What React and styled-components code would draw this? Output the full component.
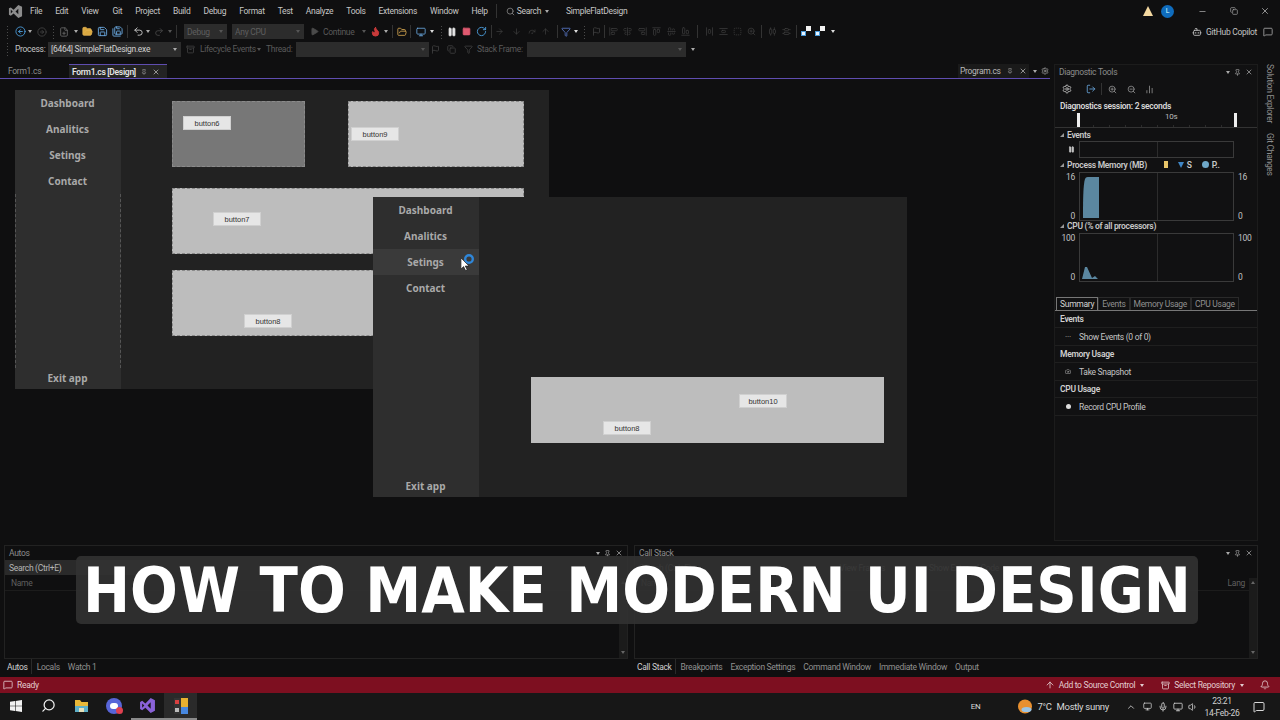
import React from 'react';
import styled, { createGlobalStyle } from 'styled-components';
import {
  AlignCenterHorizontal, AlignCenterVertical, AlignEndHorizontal, AlignEndVertical, AlignHorizontalDistributeCenter,
  AlignHorizontalSpaceAround, AlignStartHorizontal, AlignStartVertical, AlignVerticalDistributeCenter,
  AlignVerticalSpaceAround, Archive, ArrowDown, ArrowLeftCircle, ArrowRight, ArrowRightCircle, ArrowUp, BarChart2,
  Bell, Bot, Camera, ChevronUp, Copy, FilePlus, Filter, Flag, Flame, FolderOpen, LogOut, MessageSquare, Mic, Minus,
  Monitor, Pause, Pin, Play, Redo2, RedoDot, RotateCw, Save, SaveAll, Search, Settings, Square, SquareDashed, Undo2,
  Volume1, X, ZoomIn, ZoomOut,
} from 'lucide-react';

const GlobalStyle = createGlobalStyle`
  html, body { margin: 0; padding: 0; background: #0f0f10; }
  * { box-sizing: border-box; }
  #root { width: 1280px; height: 720px; overflow: hidden; }
`;

const Page = styled.div`
  position: relative;
  width: 1280px;
  height: 720px;
  display: flex;
  flex-direction: column;
  background: #0f0f10;
  color: #c4c4c4;
  font-family: Roboto, "Liberation Sans", sans-serif;
  font-size: 8.5px;
  letter-spacing: -0.3px;
  overflow: hidden;
`;

/* top chrome */
const MenuBar = styled.div`
  height: 22px;
  display: flex;
  align-items: center;
  flex: none;
`;
const Logo = styled.div`
  width: 30px;
  display: flex;
  justify-content: center;
`;
const MenuItem = styled.span`
  margin-right: ${(p) => p.$gap}px;
  margin-left: ${(p) => p.$left || 0}px;
  color: #c6c6c6;
`;
const Divider = styled.span`
  width: 1px;
  height: ${(p) => p.$h || 14}px;
  background: #333;
  margin: 0 ${(p) => p.$m ?? 5}px;
  flex: none;
`;
const Spacer = styled.div`
  flex: 1;
`;
const Gap = styled.div`
  width: ${(p) => p.$w}px;
  flex: none;
`;
const WinButton = styled.div`
  width: 31px;
  display: flex;
  justify-content: center;
  color: #aaa;
`;
const Avatar = styled.div`
  width: 13px;
  height: 13px;
  border-radius: 50%;
  background: #0f6cbd;
  color: #dff;
  font-size: 7px;
  display: flex;
  align-items: center;
  justify-content: center;
`;
const Warn = styled.div`
  width: 0;
  height: 0;
  border-left: 5px solid transparent;
  border-right: 5px solid transparent;
  border-bottom: 10px solid #f3d8a0;
  margin-right: 8px;
`;

const ToolRow = styled.div`
  height: ${(p) => p.$h}px;
  display: flex;
  align-items: center;
  flex: none;
`;
const Slot = styled.span`
  width: ${(p) => p.$w || 14}px;
  flex: none;
  display: flex;
  justify-content: center;
  align-items: center;
  color: ${(p) => p.$c || '#8f8f8f'};
`;
const Caret = styled.span`
  width: 0;
  height: 0;
  flex: none;
  border-left: 2.5px solid transparent;
  border-right: 2.5px solid transparent;
  border-top: 3px solid ${(p) => p.$c || '#aaa'};
  margin: 0 ${(p) => p.$m ?? 3}px;
`;
const Combo = styled.div`
  width: ${(p) => p.$w}px;
  height: 15px;
  flex: none;
  background: ${(p) => p.$bg || '#2c2c2c'};
  color: ${(p) => p.$c || '#5e5e5e'};
  display: flex;
  align-items: center;
  justify-content: space-between;
  padding: 0 3px;
  margin-right: ${(p) => p.$mr || 0}px;
`;
const ToolText = styled.span`
  width: ${(p) => p.$w}px;
  flex: none;
  color: ${(p) => p.$c || '#5a5a5a'};
  margin-left: ${(p) => p.$l || 0}px;
  margin-right: ${(p) => p.$r || 0}px;
  white-space: nowrap;
`;
const Grip = styled.span`
  width: 3px;
  height: 14px;
  flex: none;
  margin: 0 ${(p) => p.$r ?? 2}px 0 ${(p) => p.$l ?? 1}px;
  background-image: radial-gradient(#4a4a4a 0.6px, transparent 0.7px);
  background-size: 3px 3px;
`;

/* workspace */
const Workspace = styled.div`
  height: 485px;
  flex: none;
  display: flex;
  padding-top: 7px;
`;
const Editor = styled.div`
  width: 1052px;
  flex: none;
  display: flex;
  flex-direction: column;
`;
const DocTabs = styled.div`
  height: 15px;
  display: flex;
  align-items: stretch;
  border-bottom: 1px solid #5f4db0;
  flex: none;
  padding-left: 3px;
  margin-right: 2px;
`;
const DocTab = styled.div`
  display: flex;
  align-items: center;
  gap: ${(p) => p.$gap || 5}px;
  width: ${(p) => p.$w}px;
  padding-left: ${(p) => p.$pad ?? 5}px;
  flex: none;
  white-space: nowrap;
  background: ${(p) => (p.$active ? '#232323' : p.$bg || 'transparent')};
  border-top: ${(p) => (p.$active ? '1px solid #5f4db0' : 'none')};
  color: ${(p) => (p.$active ? '#e2e2e2' : p.$c || '#8e8e8e')};
  font-weight: ${(p) => (p.$active ? 600 : 400)};
`;
const Designer = styled.div`
  position: relative;
  flex: 1;
`;
const Form = styled.div`
  position: absolute;
  left: ${(p) => p.$x}px;
  top: ${(p) => p.$y}px;
  width: 534px;
  height: ${(p) => p.$h}px;
  display: flex;
  background: #222222;
`;
const SideBar = styled.div`
  width: 106px;
  flex: none;
  display: flex;
  flex-direction: column;
  background: #2e2e2e;
  position: relative;
`;
const SideItem = styled.div`
  height: 26px;
  flex: none;
  display: flex;
  align-items: center;
  justify-content: center;
  padding: 0 1px 1px 0;
  color: #a9a9a9;
  font-family: "Noto Sans", sans-serif;
  font-size: 10px;
  font-weight: 700;
  letter-spacing: 0;
  background: ${(p) => (p.$hover ? '#3a3a3a' : 'transparent')};
`;
const ExitItem = styled(SideItem)`
  margin-top: auto;
  height: 22px;
`;
const DashedFrame = styled.div`
  position: absolute;
  left: 0;
  right: 0;
  top: 104px;
  height: 174px;
  border-left: 1px dashed #555;
  border-right: 1px dashed #555;
`;
const Surface = styled.div`
  position: relative;
  flex: 1;
`;
const DesignPanel = styled.div`
  position: absolute;
  left: ${(p) => p.$x}px;
  top: ${(p) => p.$y}px;
  width: ${(p) => p.$w}px;
  height: 66px;
  background: ${(p) => p.$bg || '#bdbdbd'};
  outline: ${(p) => (p.$plain ? 'none' : '1px dashed #8a8a8a')};
  outline-offset: -1px;
`;
const FormButton = styled.div`
  position: absolute;
  left: ${(p) => p.$x}px;
  top: ${(p) => p.$y}px;
  width: 48px;
  height: 14px;
  background: #e6e6e6;
  border: 1px solid #d0d0d0;
  color: #333;
  font-family: "Liberation Sans", sans-serif;
  font-size: 7.5px;
  letter-spacing: 0;
  display: flex;
  align-items: center;
  justify-content: center;
`;
const CursorMark = styled.div`
  position: absolute;
  left: 88px;
  top: 54px;
  width: 20px;
  height: 22px;
`;

/* diagnostics */
const Diagnostics = styled.div`
  width: 204px;
  margin-left: 2px;
  flex: none;
  display: flex;
  flex-direction: column;
  background: #111112;
  border: 1px solid #1c1c1c;
  height: 477px;
`;
const PaneTitle = styled.div`
  height: 14px;
  flex: none;
  display: flex;
  align-items: center;
  padding: 0 4px;
  color: #8c8c8c;
  justify-content: space-between;
`;
const PaneActions = styled.div`
  display: flex;
  align-items: center;
  gap: 4px;
  color: #b5b5b5;
`;
const DiagTools = styled.div`
  height: 18px;
  margin-top: 1px;
  flex: none;
  display: flex;
  align-items: center;
  padding-left: 4px;
`;
const SessionText = styled.div`
  height: 15px;
  flex: none;
  padding-left: 5px;
  display: flex;
  align-items: center;
  font-weight: 600;
  color: #d8d8d8;
`;
const Timeline = styled.div`
  position: relative;
  height: 15px;
  flex: none;
  border-bottom: 1px solid #333;
  background: repeating-linear-gradient(90deg, #2c2c2c 0 1px, transparent 1px 16px) 22px 12px / 160px 2px no-repeat;
`;
const TimeHandle = styled.span`
  position: absolute;
  left: ${(p) => p.$x}px;
  top: 0;
  width: 3px;
  height: 14px;
  background: #eee;
`;
const TimeLabel = styled.span`
  position: absolute;
  left: 110px;
  top: -1px;
  font-size: 8px;
  color: #bbb;
`;
const GraphHead = styled.div`
  height: 13px;
  flex: none;
  display: flex;
  align-items: center;
  gap: 3px;
  padding-left: 5px;
  font-weight: 600;
  color: #c8c8c8;
`;
const Tri = styled.span`
  width: 0;
  height: 0;
  border-bottom: 4px solid #999;
  border-left: 4px solid transparent;
`;
const GraphRow = styled.div`
  display: grid;
  grid-template-columns: 24px 155px 21px;
  height: ${(p) => p.$h}px;
  flex: none;
  margin-top: ${(p) => p.$mt ?? 1}px;
`;
const AxisCol = styled.div`
  display: flex;
  flex-direction: column;
  justify-content: space-between;
  align-items: ${(p) => (p.$left ? 'flex-end' : 'flex-start')};
  padding: 0 4px;
  color: #c2c2c2;
`;
const PauseCol = styled(AxisCol)`
  justify-content: center;
`;
const GraphBox = styled.div`
  border: 1px solid #3a3a3a;
  background: linear-gradient(#2c2c2c, #2c2c2c) 77px 0 / 1px 100% no-repeat;
`;
const LegendDot = styled.span`
  width: 7px;
  height: 7px;
  border-radius: 50%;
  background: #6fa8c8;
  margin-left: 7px;
`;
const LegendTri = styled.span`
  width: 0;
  height: 0;
  border-top: 6px solid #3f86c6;
  border-left: 3.5px solid transparent;
  border-right: 3.5px solid transparent;
  margin-left: 7px;
`;
const LegendMark = styled.span`
  width: 4px;
  height: 7px;
  background: #e8c56a;
  margin-left: 14px;
`;
const DiagTabs = styled.div`
  display: flex;
  height: 14px;
  margin-top: 17px;
  flex: none;
  padding-left: 1px;
  border-bottom: 1px solid #777;
`;
const DiagTab = styled.div`
  padding: 0 3px;
  display: flex;
  align-items: center;
  white-space: nowrap;
  color: ${(p) => (p.$active ? '#d5d5d5' : '#8f8f8f')};
  border: 1px solid ${(p) => (p.$active ? '#777' : '#2a2a2a')};
  border-bottom: none;
`;
const SumHead = styled.div`
  height: 17px;
  flex: none;
  display: flex;
  align-items: center;
  padding-left: 5px;
  font-weight: 600;
  color: #cfcfcf;
  border-bottom: 1px solid #1f1f1f;
`;
const SumRow = styled.div`
  height: 18px;
  flex: none;
  display: flex;
  align-items: center;
  padding-left: 10px;
  gap: 8px;
  color: #c4c4c4;
  border-bottom: 1px solid #1f1f1f;
`;
const SumIcon = styled.span`
  width: 6px;
  height: 6px;
  display: flex;
  align-items: center;
  justify-content: center;
  color: #aaa;
`;
const RecordDot = styled.span`
  width: 5px;
  height: 5px;
  border-radius: 50%;
  background: #ddd;
`;

const SideRail = styled.div`
  width: 20px;
  flex: none;
  display: flex;
  flex-direction: column;
  align-items: center;
  gap: 10px;
  padding-left: 4px;
`;
const RailLabel = styled.div`
  writing-mode: vertical-rl;
  color: #8e8e8e;
`;

/* bottom panes */
const BottomArea = styled.div`
  height: 135px;
  flex: none;
  display: flex;
  gap: 6px;
  padding: 3px 22px 0 4px;
`;
const BottomPane = styled.div`
  width: 624px;
  flex: none;
  display: flex;
  flex-direction: column;
`;
const PaneBody = styled.div`
  position: relative;
  height: 114px;
  border: 1px solid #222;
  display: flex;
  flex-direction: column;
`;
const SearchBar = styled.div`
  height: 15px;
  width: ${(p) => p.$w || 'auto'};
  display: flex;
  align-items: center;
  gap: 8px;
  color: ${(p) => p.$c || '#b4b4b4'};
  padding-left: 4px;
  background: ${(p) => p.$bg || 'transparent'};
`;
const GhostText = styled.span`
  margin-left: ${(p) => p.$l}px;
`;
const NameHead = styled.div`
  height: 16px;
  display: flex;
  align-items: center;
  padding-left: 6px;
  color: #5f5f5f;
  border-bottom: 1px solid #1c1c1c;
  justify-content: space-between;
  padding-right: 12px;
`;
const ScrollTrack = styled.div`
  position: absolute;
  right: 0;
  top: 32px;
  bottom: 0;
  width: 8px;
  background: #1b1b1b;
  display: flex;
  flex-direction: column;
  align-items: center;
  justify-content: space-between;
  padding: 3px 0 4px;
`;
const ScrollUp = styled.span`
  width: 0;
  height: 0;
  border-left: 2.5px solid transparent;
  border-right: 2.5px solid transparent;
  border-bottom: 3px solid #666;
`;
const PaneTabs = styled.div`
  display: flex;
  height: 15px;
  align-items: center;
`;
const PaneTab = styled.div`
  padding: 0 3px;
  height: 100%;
  display: flex;
  align-items: center;
  margin-right: 2px;
  color: ${(p) => (p.$active ? '#d0d0d0' : '#8f8f8f')};
  border-right: ${(p) => (p.$active ? '1px solid #2a2a2a' : 'none')};
`;

/* status + taskbar */
const StatusBar = styled.div`
  height: 16px;
  flex: none;
  background: #7d0f20;
  display: flex;
  align-items: center;
  padding: 0 10px 0 3px;
  color: #e3cdd0;
`;
const StatusItem = styled.span`
  display: flex;
  align-items: center;
  gap: 4px;
  margin-right: ${(p) => p.$mr || 0}px;
`;
const TaskBar = styled.div`
  height: 27px;
  flex: none;
  background: #171717;
  display: flex;
  align-items: center;
`;
const TaskIcon = styled.div`
  width: ${(p) => p.$w || 33}px;
  height: 27px;
  flex: none;
  display: flex;
  align-items: center;
  justify-content: center;
  position: relative;
  background: ${(p) => (p.$open ? '#2a2a2a' : 'transparent')};
  border-bottom: ${(p) => (p.$run ? '2px solid #8a8a8a' : '2px solid transparent')};
`;
const MirrorSearch = styled(Search)`
  transform: scaleX(-1);
`;
const TrayText = styled.span`
  margin: 0 ${(p) => p.$m || 0}px;
  color: #d8d8d8;
  font-size: ${(p) => p.$s || 9.5}px;
  white-space: nowrap;
`;
const Clock = styled.div`
  width: 44px;
  text-align: center;
  font-size: 8.5px;
  line-height: 12px;
  color: #d0d0d0;
`;

/* video caption over the page */
const Caption = styled.div`
  position: absolute;
  left: 76px;
  top: 556px;
  width: 1122px;
  height: 68px;
  padding-top: 1px;
  border-radius: 5px;
  background: rgba(50, 50, 50, 0.9);
  display: flex;
  align-items: center;
  justify-content: center;
  color: #fff;
  font-family: "DejaVu Sans", sans-serif;
  font-stretch: condensed;
  font-weight: 700;
  font-size: 62.5px;
  letter-spacing: 0;
  white-space: nowrap;
`;

const MENU = [
  ['File', 13], ['Edit', 13], ['View', 14], ['Git', 13], ['Project', 13], ['Build', 13], ['Debug', 13],
  ['Format', 13], ['Test', 13], ['Analyze', 13], ['Tools', 13], ['Extensions', 13], ['Window', 13], ['Help', 0],
];
const SIDE = ['Dashboard', 'Analitics', 'Setings', 'Contact'];

function Side({ hover, frame }) {
  return (
    <SideBar>
      {frame && <DashedFrame />}
      {SIDE.map((s) => (
        <SideItem key={s} $hover={hover === s}>{s}</SideItem>
      ))}
      <ExitItem>Exit app</ExitItem>
    </SideBar>
  );
}

function VsLogo({ size = 15, color = '#8d8d8d' }) {
  return (
    <svg width={size} height={size} viewBox="0 0 16 16">
      <path d="M11 1l4 2v10l-4 2-5-5-3 2.4L1 11.4V4.6L3 3.6 6 6zM3 6v4l2-2zm8-1L8 8l3 3z" fill={color} fillRule="evenodd" />
    </svg>
  );
}

function LayoutGlyph() {
  return (
    <svg width="11" height="11" viewBox="0 0 11 11">
      <rect x="0" y="5" width="5" height="5" fill="#4a9ad8" />
      <rect x="1" y="6" width="3" height="3" fill="#e8f4ff" />
      <rect x="5" y="0" width="5" height="5" fill="#f2f2f2" />
    </svg>
  );
}

function PaneHead({ title }) {
  return (
    <PaneTitle>
      <span>{title}</span>
      <PaneActions>
        <Caret $m={0} />
        <Pin size={7} />
        <X size={8} />
      </PaneActions>
    </PaneTitle>
  );
}

export default function App() {
  return (
    <Page>
      <GlobalStyle />
      <MenuBar>
        <Logo><VsLogo /></Logo>
        {MENU.map(([m, g]) => (
          <MenuItem key={m} $gap={g}>{m}</MenuItem>
        ))}
        <Divider $m={8} />
        <Slot $w={12}><Search size={9} /></Slot>
        <MenuItem $gap={3}>Search</MenuItem>
        <Caret $m={1} />
        <MenuItem $gap={0} $left={16}>SimpleFlatDesign</MenuItem>
        <Spacer />
        <Warn />
        <Avatar>L</Avatar>
        <Gap $w={13} />
        <WinButton><Minus size={9} /></WinButton>
        <WinButton><Copy size={8} /></WinButton>
        <WinButton><X size={10} /></WinButton>
      </MenuBar>

      <ToolRow $h={19}>
        <Grip $l={6} $r={4} />
        <Slot $w={14} $c="#4a9ad8"><ArrowLeftCircle size={11} /></Slot>
        <Caret $m={1} />
        <Slot $w={18} $c="#444"><ArrowRightCircle size={10} /></Slot>
        <Grip />
        <Slot $w={14} $c="#6a6a6a"><FilePlus size={10} /></Slot>
        <Caret $m={2.5} />
        <Slot $w={15} $c="#e0b050"><FolderOpen size={11} fill="#d9a840" /></Slot>
        <Slot $w={15} $c="#6aa8e0"><Save size={11} /></Slot>
        <Slot $w={14} $c="#6aa8e0"><SaveAll size={11} /></Slot>
        <Divider $h={13} $m={3} />
        <Slot $w={14} $c="#c8c8c8"><Undo2 size={11} /></Slot>
        <Caret $m={1} />
        <Slot $w={16} $c="#484848"><Redo2 size={10} /></Slot>
        <Caret $m={1} $c="#555" />
        <Divider $h={13} $m={3} />
        <Gap $w={4} />
        <Combo $w={43} $mr={5}>Debug<Caret $c="#555" $m={1} /></Combo>
        <Combo $w={72} $mr={4}>Any CPU<Caret $c="#555" $m={1} /></Combo>
        <Slot $w={12} $c="#4a4a4a"><Play size={9} fill="#4a4a4a" /></Slot>
        <ToolText $l={3} $w={33} $r={5}>Continue</ToolText>
        <Caret $c="#555" $m={1} />
        <Slot $w={16} $c="#c83a3a"><Flame size={11} fill="#c83a3a" /></Slot>
        <Caret $m={1} />
        <Divider $h={13} $m={3} />
        <Slot $w={12} $c="#d8a850"><FolderOpen size={10} /></Slot>
        <Divider $h={13} $m={2} />
        <Slot $w={16} $c="#6aa8e0"><Monitor size={10} /></Slot>
        <Caret $m={1} $c="#ddd" />
        <Grip $l={5} $r={2} />
        <Slot $w={14} $c="#e8e8e8"><Pause size={10} fill="#e8e8e8" /></Slot>
        <Slot $w={15} $c="#e05a70"><Square size={9} fill="#e05a70" /></Slot>
        <Slot $w={15} $c="#4a9ad8"><RotateCw size={11} /></Slot>
        <Divider $h={13} $m={2} />
        <Slot $w={10} $c="#3c3c3c"><ArrowRight size={9} /></Slot>
        <Slot $w={24} $c="#3c3c3c"><ArrowDown size={9} /></Slot>
        <Slot $w={8} $c="#3c3c3c"><RedoDot size={9} /></Slot>
        <Slot $w={18} $c="#3c3c3c"><ArrowUp size={9} /></Slot>
        <Divider $h={13} $m={3} />
        <Slot $w={10} $c="#5a78c8"><Filter size={10} /></Slot>
        <Caret $m={3} $c="#ddd" />
        <Grip $l={2} $r={3} />
        <Slot $w={14} $c="#444"><Flag size={9} /></Slot>
        <Divider $h={13} $m={1} />
        <Slot $w={14.5} $c="#3c3c3c"><AlignStartVertical size={9} /></Slot>
        <Slot $w={14.5} $c="#3c3c3c"><AlignCenterVertical size={9} /></Slot>
        <Slot $w={14.5} $c="#3c3c3c"><AlignEndVertical size={9} /></Slot>
        <Slot $w={14.5} $c="#3c3c3c"><AlignStartHorizontal size={9} /></Slot>
        <Slot $w={14.5} $c="#3c3c3c"><AlignCenterHorizontal size={9} /></Slot>
        <Slot $w={14.5} $c="#3c3c3c"><AlignEndHorizontal size={9} /></Slot>
        <Divider $h={13} $m={4} />
        <Slot $w={14} $c="#3c3c3c"><AlignHorizontalSpaceAround size={9} /></Slot>
        <Slot $w={14} $c="#3c3c3c"><AlignVerticalSpaceAround size={9} /></Slot>
        <Slot $w={14} $c="#3c3c3c"><SquareDashed size={9} /></Slot>
        <Slot $w={14} $c="#3c3c3c"><ZoomIn size={9} /></Slot>
        <Divider $h={13} $m={3} />
        <Slot $w={14} $c="#3c3c3c"><AlignHorizontalDistributeCenter size={9} /></Slot>
        <Slot $w={14} $c="#3c3c3c"><AlignVerticalDistributeCenter size={9} /></Slot>
        <Divider $h={13} $m={3} />
        <Slot $w={13}><LayoutGlyph /></Slot>
        <Slot $w={15}><LayoutGlyph /></Slot>
        <Caret $m={3} $c="#ddd" />
        <Spacer />
        <Slot $w={13} $c="#c8c8c8"><Bot size={10} /></Slot>
        <ToolText $c="#c2c2c2" $l={3}>GitHub Copilot</ToolText>
        <Gap $w={3} />
        <Slot $w={16} $c="#aaa"><MessageSquare size={10} /></Slot>
        <Gap $w={4} />
      </ToolRow>

      <ToolRow $h={16}>
        <Grip $l={6} $r={6} />
        <ToolText $c="#c4c4c4" $w={33}>Process:</ToolText>
        <Combo $w={133} $c="#cfcfcf">[6464] SimpleFlatDesign.exe<Caret $m={1} /></Combo>
        <Slot $w={18} $c="#444"><Archive size={9} /></Slot>
        <ToolText $l={1} $w={56}>Lifecycle Events</ToolText>
        <Caret $c="#555" $m={1} />
        <ToolText $l={4} $w={30}>Thread:</ToolText>
        <Combo $w={133}><span /><Caret $c="#555" $m={1} /></Combo>
        <Slot $w={12} $c="#444"><Flag size={9} /></Slot>
        <Slot $w={20} $c="#444"><Copy size={9} /></Slot>
        <Slot $w={14} $c="#444"><Filter size={9} /></Slot>
        <ToolText $l={2} $w={50}>Stack Frame:</ToolText>
        <Combo $w={159}><span /><Caret $c="#555" $m={1} /></Combo>
        <Gap $w={5} />
        <Caret $m={0} />
      </ToolRow>

      <Workspace>
        <Editor>
          <DocTabs>
            <DocTab $w={66}>Form1.cs</DocTab>
            <DocTab $w={98} $pad={3} $active>
              Form1.cs [Design]
              <Pin size={6} color="#aaa" />
              <X size={8} color="#ccc" />
            </DocTab>
            <Spacer />
            <DocTab $w={71} $pad={2} $gap={6} $bg="#1a1a1a" $c="#b8b8b8">
              Program.cs
              <Pin size={6} color="#aaa" />
              <X size={8} color="#ccc" />
            </DocTab>
            <Slot $w={11}><Caret $m={0} /></Slot>
            <Slot $w={10} $c="#aaa"><Settings size={8} /></Slot>
          </DocTabs>
          <Designer>
            <Form $x={15} $y={11} $h={299}>
              <Side frame />
              <Surface>
                <DesignPanel $x={51} $y={11} $w={133} $bg="#777">
                  <FormButton $x={11} $y={15}>button6</FormButton>
                </DesignPanel>
                <DesignPanel $x={227} $y={11} $w={176}>
                  <FormButton $x={3} $y={26}>button9</FormButton>
                </DesignPanel>
                <DesignPanel $x={51} $y={98} $w={352}>
                  <FormButton $x={41} $y={24}>button7</FormButton>
                </DesignPanel>
                <DesignPanel $x={51} $y={180} $w={352}>
                  <FormButton $x={72} $y={44}>button8</FormButton>
                </DesignPanel>
              </Surface>
            </Form>
            <Form $x={373} $y={118} $h={300}>
              <Side hover="Setings" />
              <Surface>
                <DesignPanel $x={52} $y={180} $w={353} $plain>
                  <FormButton $x={208} $y={17}>button10</FormButton>
                  <FormButton $x={72} $y={44}>button8</FormButton>
                </DesignPanel>
              </Surface>
              <CursorMark>
                <svg width="20" height="22" viewBox="0 0 20 22">
                  <circle cx="8" cy="8" r="3.8" fill="none" stroke="#2f86d8" strokeWidth="2.4" />
                  <path d="M0 7v11l2.6-2.4 2 4 1.6-.8-2-3.8H8z" fill="#fff" stroke="#111" strokeWidth=".6" />
                </svg>
              </CursorMark>
            </Form>
          </Designer>
        </Editor>

        <Diagnostics>
          <PaneHead title="Diagnostic Tools" />
          <DiagTools>
            <Slot $w={15} $c="#c8c8c8"><Settings size={10} /></Slot>
            <Gap $w={9} />
            <Slot $w={15} $c="#6aa8e0"><LogOut size={10} /></Slot>
            <Divider $h={12} $m={3} />
            <Slot $w={14} $c="#9a9a9a"><ZoomIn size={9} /></Slot>
            <Gap $w={5} />
            <Slot $w={14} $c="#9a9a9a"><ZoomOut size={9} /></Slot>
            <Gap $w={4} />
            <Slot $w={14} $c="#9a9a9a"><BarChart2 size={9} /></Slot>
          </DiagTools>
          <SessionText>Diagnostics session: 2 seconds</SessionText>
          <Timeline>
            <TimeHandle $x={22} />
            <TimeLabel>10s</TimeLabel>
            <TimeHandle $x={179} />
          </Timeline>
          <GraphHead><Tri />Events</GraphHead>
          <GraphRow $h={17} $mt={0}>
            <PauseCol $left>
              <Pause size={7} fill="#ccc" color="#ccc" />
            </PauseCol>
            <GraphBox />
            <div />
          </GraphRow>
          <GraphHead>
            <Tri />Process Memory (MB)
            <LegendMark /><LegendTri />S<LegendDot />P..
          </GraphHead>
          <GraphRow $h={47}>
            <AxisCol $left><span>16</span><span>0</span></AxisCol>
            <GraphBox>
              <svg width="153" height="45" viewBox="0 0 153 45">
                <path d="M3 45C3 30 3 12 5 6c1-2 2-2 4-2h10v41z" fill="#5b87a0" />
              </svg>
            </GraphBox>
            <AxisCol><span>16</span><span>0</span></AxisCol>
          </GraphRow>
          <GraphHead><Tri />CPU (% of all processors)</GraphHead>
          <GraphRow $h={47}>
            <AxisCol $left><span>100</span><span>0</span></AxisCol>
            <GraphBox>
              <svg width="153" height="45" viewBox="0 0 153 45">
                <path d="M2 45l3-12 2 0 5 11 3-2 3 3z" fill="#5b87a0" />
              </svg>
            </GraphBox>
            <AxisCol><span>100</span><span>0</span></AxisCol>
          </GraphRow>
          <DiagTabs>
            <DiagTab $active>Summary</DiagTab>
            <DiagTab>Events</DiagTab>
            <DiagTab>Memory Usage</DiagTab>
            <DiagTab>CPU Usage</DiagTab>
          </DiagTabs>
          <SumHead>Events</SumHead>
          <SumRow><SumIcon>···</SumIcon>Show Events (0 of 0)</SumRow>
          <SumHead>Memory Usage</SumHead>
          <SumRow><SumIcon><Camera size={7} /></SumIcon>Take Snapshot</SumRow>
          <SumHead>CPU Usage</SumHead>
          <SumRow><SumIcon><RecordDot /></SumIcon>Record CPU Profile</SumRow>
        </Diagnostics>
        <SideRail>
          <RailLabel>Solution Explorer</RailLabel>
          <RailLabel>Git Changes</RailLabel>
        </SideRail>
      </Workspace>

      <BottomArea>
        <BottomPane>
          <PaneBody>
            <PaneHead title="Autos" />
            <SearchBar $bg="#2a2a2a" $w="145px">Search (Ctrl+E)</SearchBar>
            <NameHead><span>Name</span></NameHead>
            <ScrollTrack><ScrollUp /><Caret $m={0} $c="#666" /></ScrollTrack>
          </PaneBody>
          <PaneTabs>
            <PaneTab $active>Autos</PaneTab>
            <PaneTab>Locals</PaneTab>
            <PaneTab>Watch 1</PaneTab>
          </PaneTabs>
        </BottomPane>
        <BottomPane>
          <PaneBody>
            <PaneHead title="Call Stack" />
            <SearchBar $c="#777">
              Search (Ctrl+E)
              <GhostText $l={140}>View Frames</GhostText>
              <GhostText $l={36}>Show External Code</GhostText>
            </SearchBar>
            <NameHead><span>Name</span><span>Lang</span></NameHead>
            <ScrollTrack><ScrollUp /><Caret $m={0} $c="#666" /></ScrollTrack>
          </PaneBody>
          <PaneTabs>
            <PaneTab $active>Call Stack</PaneTab>
            <PaneTab>Breakpoints</PaneTab>
            <PaneTab>Exception Settings</PaneTab>
            <PaneTab>Command Window</PaneTab>
            <PaneTab>Immediate Window</PaneTab>
            <PaneTab>Output</PaneTab>
          </PaneTabs>
        </BottomPane>
      </BottomArea>

      <StatusBar>
        <StatusItem><MessageSquare size={10} />Ready</StatusItem>
        <Spacer />
        <StatusItem $mr={16}><ArrowUp size={10} /> Add to Source Control<Caret $m={1} $c="#e3cdd0" /></StatusItem>
        <StatusItem $mr={15}><Archive size={9} /> Select Repository<Caret $m={1} $c="#e3cdd0" /></StatusItem>
        <Bell size={10} />
      </StatusBar>

      <TaskBar>
        <TaskIcon $w={32}>
          <svg width="12" height="12" viewBox="0 0 12 12">
            <path d="M0 1.8l5-.7v4.6H0zM5.6 1l6.4-1v5.7H5.6zM0 6.3h5v4.6l-5-.7zM5.6 6.3H12V12l-6.4-1z" fill="#f2f2f2" />
          </svg>
        </TaskIcon>
        <TaskIcon><MirrorSearch size={15} color="#f0f0f0" /></TaskIcon>
        <TaskIcon>
          <svg width="15" height="14" viewBox="0 0 15 14">
            <path d="M1 1h5l1.5 2H14v10H1z" fill="#e8b838" />
            <rect x="1" y="7" width="13" height="6" fill="#5fb0c8" />
            <rect x="5" y="9" width="5" height="4" fill="#e8e0b8" />
          </svg>
        </TaskIcon>
        <TaskIcon>
          <svg width="18" height="18" viewBox="0 0 18 18">
            <circle cx="8" cy="9" r="8" fill="#5865d8" />
            <rect x="4" y="6" width="8" height="6" rx="3" fill="#fff" />
            <circle cx="13.5" cy="13.5" r="3.5" fill="#e04050" />
          </svg>
        </TaskIcon>
        <TaskIcon $run>
          <VsLogo size={17} color="#8a62d8" />
        </TaskIcon>
        <TaskIcon $run $open>
          <svg width="14" height="16" viewBox="0 0 14 16">
            <rect x="0" y="0" width="7" height="16" fill="#333" />
            <rect x="1" y="2" width="4" height="4" fill="#d84040" />
            <rect x="1" y="10" width="4" height="4" fill="#bbb" />
            <rect x="7" y="0" width="7" height="9" fill="#e8b030" />
            <rect x="7" y="9" width="7" height="7" fill="#4888e0" />
          </svg>
        </TaskIcon>
        <Spacer />
        <TrayText $s={8}>EN</TrayText>
        <Gap $w={38} />
        <svg width="14" height="15" viewBox="0 0 14 15">
          <circle cx="7" cy="7.5" r="7" fill="#e89030" />
          <ellipse cx="8.5" cy="10.5" rx="5" ry="2.6" fill="#9cc4e4" />
        </svg>
        <TrayText $m={5}>7°C</TrayText>
        <TrayText>Mostly sunny</TrayText>
        <Gap $w={15} />
        <Slot $w={14} $c="#d0d0d0"><ChevronUp size={10} /></Slot>
        <Slot $w={18} $c="#d0d0d0"><Monitor size={9} /></Slot>
        <Slot $w={14} $c="#d0d0d0"><Mic size={10} /></Slot>
        <Slot $w={16} $c="#d0d0d0"><Monitor size={10} /></Slot>
        <Slot $w={14} $c="#d0d0d0"><Volume1 size={10} /></Slot>
        <Clock>23:21<br />14-Feb-26</Clock>
        <Gap $w={7} />
        <Slot $w={16} $c="#d8d8d8"><MessageSquare size={12} /></Slot>
        <Gap $w={13} />
      </TaskBar>

      <Caption>HOW TO MAKE MODERN UI DESIGN</Caption>
    </Page>
  );
}
